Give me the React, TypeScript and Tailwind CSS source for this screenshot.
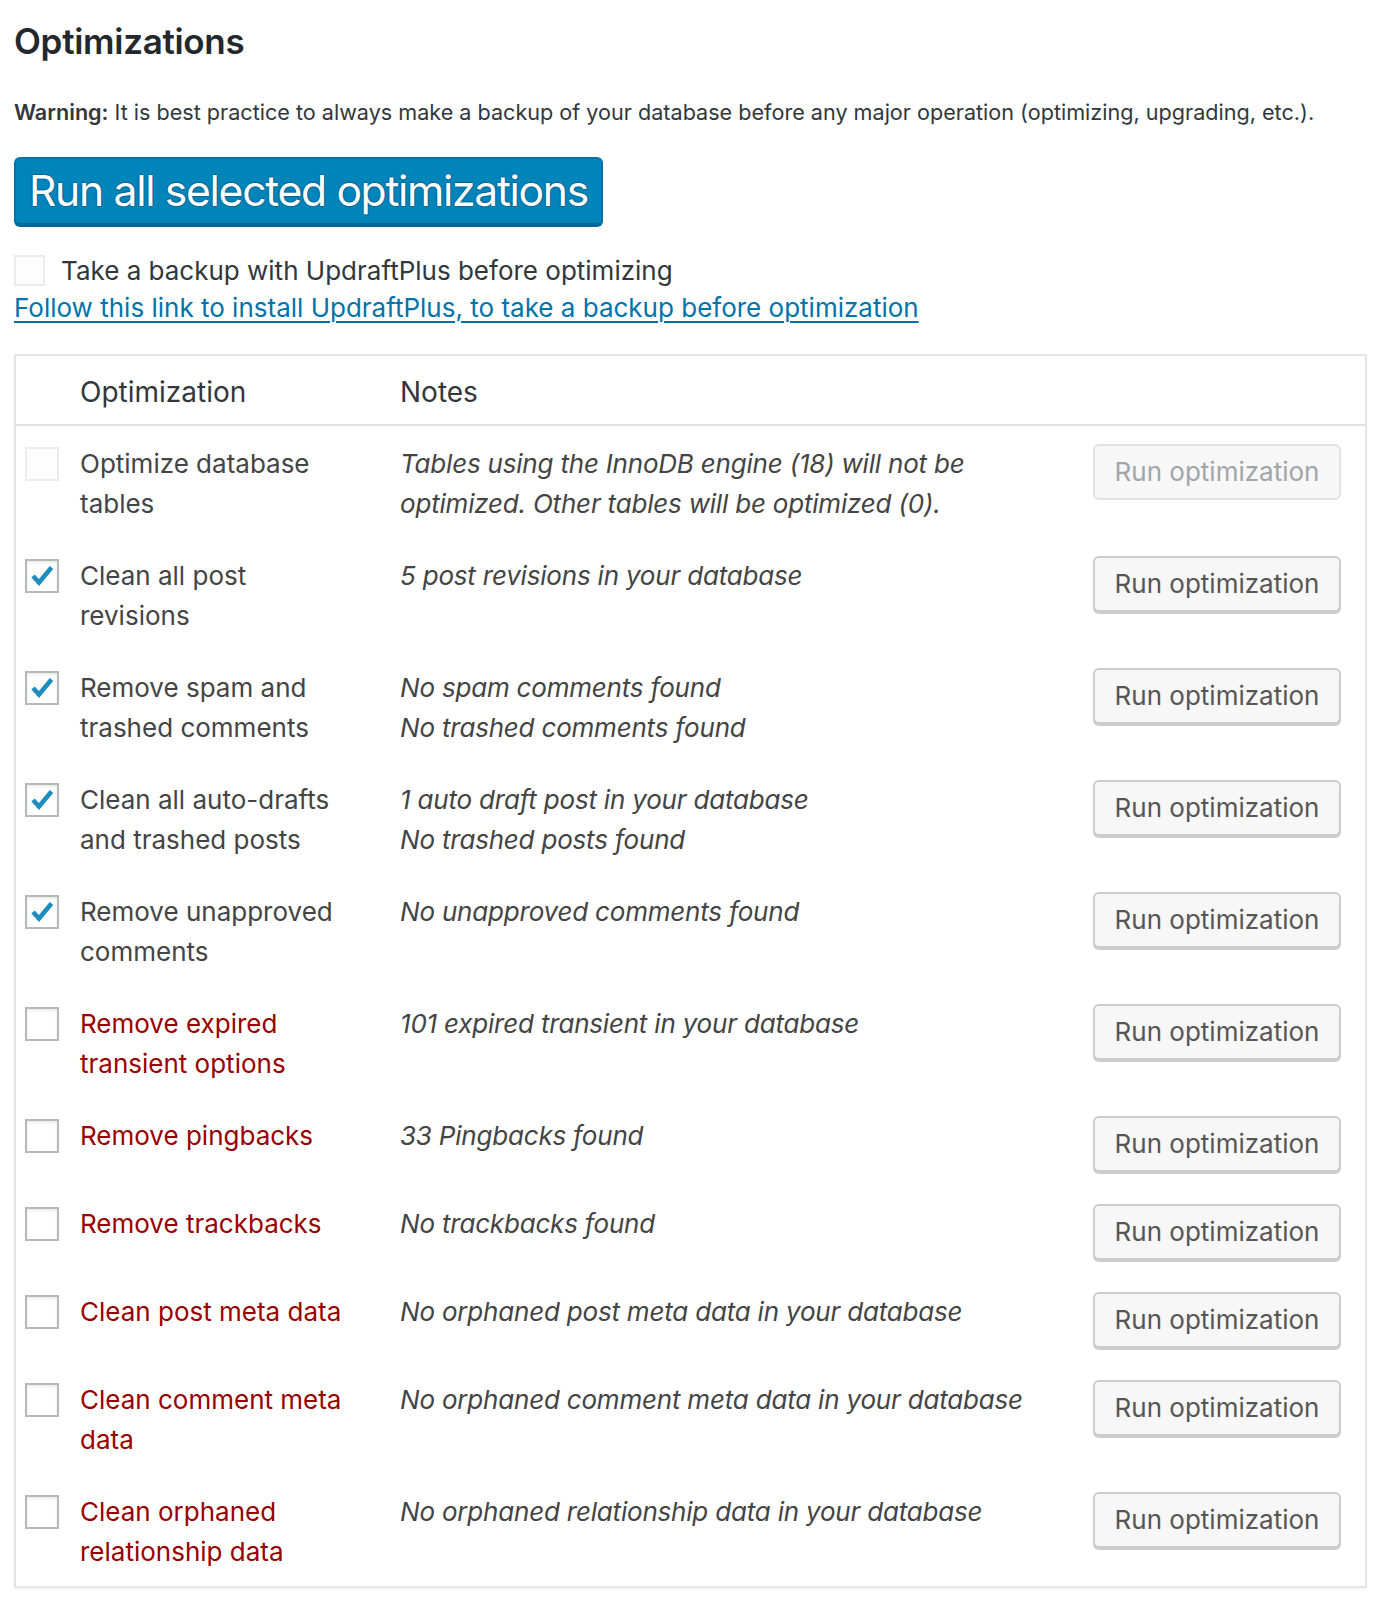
import React from "react";

type Row = {
  label: string;
  notes: string[];
  box: "disabled" | "checked" | "empty";
  red?: boolean;
  disabled?: boolean;
};

const rows: Row[] = [
  {
    label: "Optimize database tables",
    notes: ["Tables using the InnoDB engine (18) will not be optimized. Other tables will be optimized (0)."],
    box: "disabled",
    disabled: true,
  },
  { label: "Clean all post revisions", notes: ["5 post revisions in your database"], box: "checked" },
  {
    label: "Remove spam and trashed comments",
    notes: ["No spam comments found", "No trashed comments found"],
    box: "checked",
  },
  {
    label: "Clean all auto-drafts and trashed posts",
    notes: ["1 auto draft post in your database", "No trashed posts found"],
    box: "checked",
  },
  { label: "Remove unapproved comments", notes: ["No unapproved comments found"], box: "checked" },
  {
    label: "Remove expired transient options",
    notes: ["101 expired transient in your database"],
    box: "empty",
    red: true,
  },
  { label: "Remove pingbacks", notes: ["33 Pingbacks found"], box: "empty", red: true },
  { label: "Remove trackbacks", notes: ["No trackbacks found"], box: "empty", red: true },
  {
    label: "Clean post meta data",
    notes: ["No orphaned post meta data in your database"],
    box: "empty",
    red: true,
  },
  {
    label: "Clean comment meta data",
    notes: ["No orphaned comment meta data in your database"],
    box: "empty",
    red: true,
  },
  {
    label: "Clean orphaned relationship data",
    notes: ["No orphaned relationship data in your database"],
    box: "empty",
    red: true,
  },
];

function Checkbox({ state }: { state: Row["box"] }) {
  if (state === "disabled") {
    return <div className="w-[34px] h-[34px] border-2 border-[#ececec] bg-[#fdfdfd]" />;
  }
  return (
    <div className="w-[34px] h-[34px] border-2 border-[#b4b9be] bg-white shadow-[inset_0_2px_3px_rgba(0,0,0,0.08)] flex items-center justify-center">
      {state === "checked" && (
        <svg width="26" height="26" viewBox="0 0 26 26">
          <path d="M4 13 L10 19.5 L22.5 4.5" fill="none" stroke="#1e8cbe" strokeWidth="4.6" strokeLinejoin="miter" />
        </svg>
      )}
    </div>
  );
}

export default function App() {
  return (
    <div className="bg-white min-h-[1606px] px-[14px] pt-[19px] font-['Inter','Liberation_Sans',sans-serif] text-[#444]">
      <h2 className="text-[35px] leading-[44px] font-semibold text-[#23282d] tracking-[-0.3px]">Optimizations</h2>

      <p className="mt-[34px] text-[21.6px] leading-[30px] text-[#32373c]">
        <strong className="font-semibold">Warning:</strong> It is best practice to always make a backup of your
        database before any major operation (optimizing, upgrading, etc.).
      </p>

      <button className="mt-[30px] h-[68px] px-[13px] rounded-[6px] bg-[#0085ba] border-2 border-[#0073aa] border-b-[#006799] shadow-[0_2px_0_#006799] text-white text-[42.6px] leading-[60px] tracking-[-1.3px] [text-shadow:0_-1px_1px_#006799,1px_0_1px_#006799,0_1px_1px_#006799,-1px_0_1px_#006799]">
        Run all selected optimizations
      </button>

      <div className="mt-[25px] flex items-center h-[40px] text-[26px]">
        <div className="w-[31px] h-[31px] border-2 border-[#ececec] bg-[#fdfdfd]" />
        <span className="ml-[16px] text-[#32373c]">Take a backup with UpdraftPlus before optimizing</span>
      </div>
      <a href="#" className="block text-[26px] leading-[36px] text-[#0073aa] underline underline-offset-[4px] decoration-2">
        Follow this link to install UpdraftPlus, to take a backup before optimization
      </a>

      <div className="mt-[28px] mr-[3px] border-2 border-[#e5e5e5] shadow-[0_2px_2px_rgba(0,0,0,0.04)]">
        <div className="grid grid-cols-[64px_320px_1fr_292px] h-[70px] items-center border-b-2 border-[#e1e1e1] text-[28px] text-[#32373c]">
          <div />
          <div className="pt-[4px]">Optimization</div>
          <div className="pt-[4px]">Notes</div>
          <div />
        </div>

        {rows.map((row) => (
          <div
            key={row.label}
            className="grid grid-cols-[64px_320px_1fr_292px] items-start pt-[18px] pb-[14px] text-[26px] leading-[40px]"
          >
            <div className="pl-[9px] pt-[3px]">
              <Checkbox state={row.box} />
            </div>
            <div className={`pr-[50px] ${row.red ? "text-[#990000]" : "text-[#444]"}`}>{row.label}</div>
            <div className="italic text-[#444] tracking-[-0.2px]">
              {row.notes.map((n) => (
                <div key={n}>{n}</div>
              ))}
            </div>
            <div className="pl-[20px]">
              {row.disabled ? (
                <div className="w-[248px] h-[56px] rounded-[6px] border-2 border-[#e2e2e2] bg-[#f7f7f7] text-[#a0a5aa] flex items-center justify-center">
                  Run optimization
                </div>
              ) : (
                <button className="w-[248px] h-[56px] rounded-[6px] border-2 border-[#ccc] bg-[#f7f7f7] shadow-[0_2px_0_#ccc] text-[#555] flex items-center justify-center">
                  Run optimization
                </button>
              )}
            </div>
          </div>
        ))}
      </div>
    </div>
  );
}
